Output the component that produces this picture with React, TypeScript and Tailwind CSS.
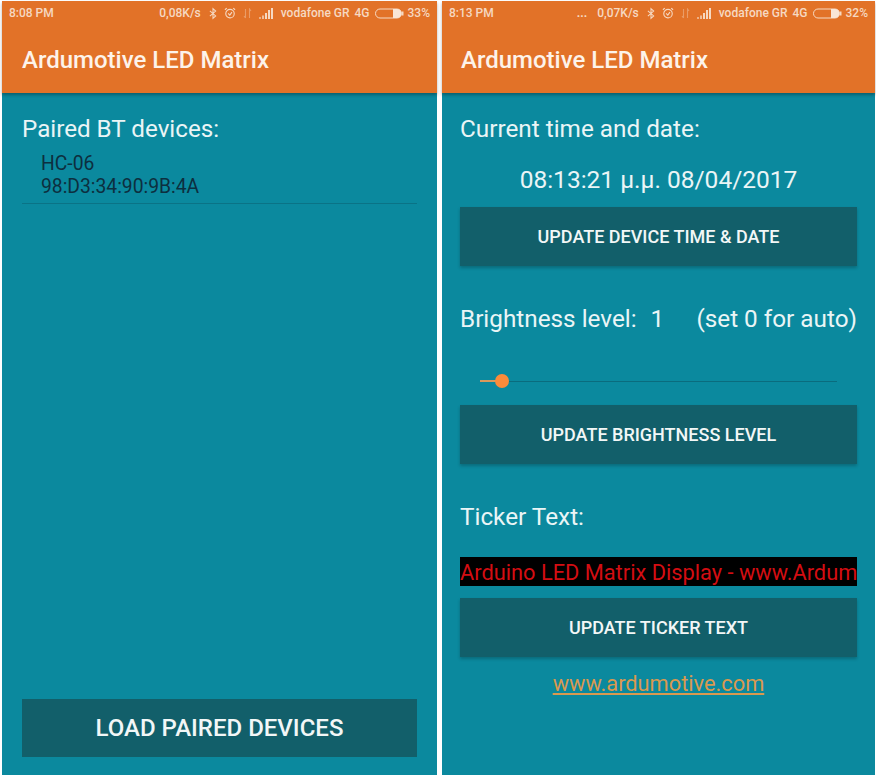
const font = { fontFamily: 'Roboto, sans-serif' };

function Bluetooth() {
  return (
    <svg width="8" height="13" viewBox="0 0 9 13" fill="none" stroke="#f6d9c2" strokeWidth="1.2" className="shrink-0">
      <path d="M1 3.5 L7.5 9.2 L4.5 12 V1 L7.5 3.8 L1 9.5" />
    </svg>
  );
}

function Alarm() {
  return (
    <svg width="12" height="12" viewBox="0 0 13 13" fill="none" stroke="#f6d9c2" strokeWidth="1.2" className="shrink-0">
      <circle cx="6.5" cy="7.2" r="4.6" />
      <path d="M4.5 7 L6.3 8.8 L8.6 5.6" />
      <path d="M1 3 L3 1.2 M12 3 L10 1.2" />
    </svg>
  );
}

function Transfer() {
  return (
    <svg width="9" height="11" viewBox="0 0 9 11" fill="none" stroke="#ea9c66" strokeWidth="1.1" className="shrink-0">
      <path d="M2.5 1 V10 M1 8 L2.5 10 M6.5 10 V1 L8 3" />
    </svg>
  );
}

function Signal() {
  return (
    <svg width="15" height="11" viewBox="0 0 15 11" fill="#f6d9c2" className="shrink-0">
      <rect x="0" y="9" width="2" height="2" opacity="0.6" />
      <rect x="3" y="7.5" width="2" height="3.5" opacity="0.75" />
      <rect x="6" y="5" width="2" height="6" />
      <rect x="9" y="2" width="2" height="9" />
      <rect x="12" y="0" width="2" height="11" />
    </svg>
  );
}

function Battery() {
  return (
    <svg width="29" height="11" viewBox="0 0 29 11" fill="none" className="shrink-0">
      <rect x="0.5" y="1" width="26" height="9" rx="4.5" stroke="#f6d9c2" strokeWidth="1" />
      <path d="M18 1 H22 A4.5 4.5 0 0 1 22 10 H18 Z" fill="#f9e6d6" />
      <rect x="27" y="3.5" width="1.5" height="4" fill="#f6d9c2" />
    </svg>
  );
}

function StatusBar({ time, speed, pct, dots }: { time: string; speed: string; pct: string; dots?: boolean }) {
  return (
    <div className="h-[24px] flex items-center text-[12px] font-medium text-[#f6d9c2] whitespace-nowrap pl-[7px] pr-[7px]">
      <span>{time}</span>
      <div className="ml-auto flex items-center">
        {dots && <span className="mr-[10px] font-bold leading-none">...</span>}
        <span className="mr-[8px]">{speed}</span>
        <Bluetooth />
        <span className="w-[7px]" />
        <Alarm />
        <span className="w-[7px]" />
        <Transfer />
        <span className="w-[7px]" />
        <Signal />
        <span className="ml-[7px]">vodafone GR</span>
        <span className="ml-[5px]">4G</span>
        <span className="w-[5px]" />
        <Battery />
        <span className="ml-[4px]">{pct}</span>
      </div>
    </div>
  );
}

function Header(props: { time: string; speed: string; pct: string; dots?: boolean; titleInset: string }) {
  return (
    <div className="bg-[#e27228] h-[92px] shrink-0 shadow-[0_2px_3px_rgba(0,0,0,0.3)] relative">
      <StatusBar time={props.time} speed={props.speed} pct={props.pct} dots={props.dots} />
      <div className={`${props.titleInset} text-[#fdf3ea] text-[24px] leading-[32px] font-medium mt-[19px]`}>Ardumotive LED Matrix</div>
    </div>
  );
}

function ActionButton({ label, big }: { label: string; big?: boolean }) {
  return (
    <div
      className={`bg-[#125f6a] text-[#f2f7f7] font-medium flex items-center justify-center ${
        big ? 'h-[58px] text-[24px]' : 'h-[59px] text-[18px] shadow-[0_2px_3px_rgba(0,0,0,0.22)]'
      }`}
    >
      {label}
    </div>
  );
}

export default function App() {
  return (
    <div className="w-[876px] h-[775px] bg-white flex overflow-hidden pt-px pl-[2px] gap-[5px]" style={font}>
      <div className="w-[435px] h-[774px] bg-[#0b899e] flex flex-col">
        <Header time="8:08 PM" speed="0,08K/s" pct="33%" titleInset="pl-[20px]" />
        <div className="flex-1 flex flex-col px-[20px] pb-[18px]">
          <div className="text-[#eaf5f6] text-[24.2px] leading-[28px] mt-[22px]">Paired BT devices:</div>
          <div className="pl-[19px] text-[#0d2f3f] text-[19.3px] leading-[23px] mt-[9px]">
            <div>HC-06</div>
            <div>98:D3:34:90:9B:4A</div>
          </div>
          <div className="h-px bg-[#0a7386] mt-[5px]" />
          <div className="mt-auto">
            <ActionButton label="LOAD PAIRED DEVICES" big />
          </div>
        </div>
      </div>
      <div className="w-[433px] h-[774px] bg-[#0b899e] flex flex-col">
        <Header time="8:13 PM" speed="0,07K/s" pct="32%" dots titleInset="pl-[19px]" />
        <div className="flex-1 flex flex-col pl-[18px] pr-[18px] text-[#eaf5f6]">
          <div className="text-[24.3px] leading-[28px] mt-[22px]">Current time and date:</div>
          <div className="text-[24.5px] leading-[28px] text-center mt-[23px]">08:13:21 μ.μ. 08/04/2017</div>
          <div className="mt-[13px]">
            <ActionButton label="UPDATE DEVICE TIME & DATE" />
          </div>
          <div className="text-[24.3px] leading-[28px] mt-[39px] flex justify-between whitespace-nowrap">
            <span>
              Brightness level:<span className="ml-[14px]">1</span>
            </span>
            <span>(set 0 for auto)</span>
          </div>
          <div className="h-[12px] mt-[42px] mx-[20px] flex items-center">
            <div className="w-[16px] h-[2px] bg-[#d9995c]" />
            <div className="w-[14px] h-[14px] -ml-[1px] rounded-full bg-[#fb8b3a] shrink-0" />
            <div className="flex-1 h-px bg-[#0a6c7e]" />
          </div>
          <div className="mt-[18px]">
            <ActionButton label="UPDATE BRIGHTNESS LEVEL" />
          </div>
          <div className="text-[24.3px] leading-[28px] mt-[39px]">Ticker Text:</div>
          <div className="bg-black text-[#d40d12] text-[21.8px] leading-[29px] h-[29px] mt-[26px] pt-px whitespace-nowrap overflow-hidden">
            Arduino LED Matrix Display - www.Ardum
          </div>
          <div className="mt-[12px]">
            <ActionButton label="UPDATE TICKER TEXT" />
          </div>
          <div className="text-center mt-[13px] text-[21.8px] leading-[28px] text-[#d9994f] underline">www.ardumotive.com</div>
        </div>
      </div>
    </div>
  );
}
